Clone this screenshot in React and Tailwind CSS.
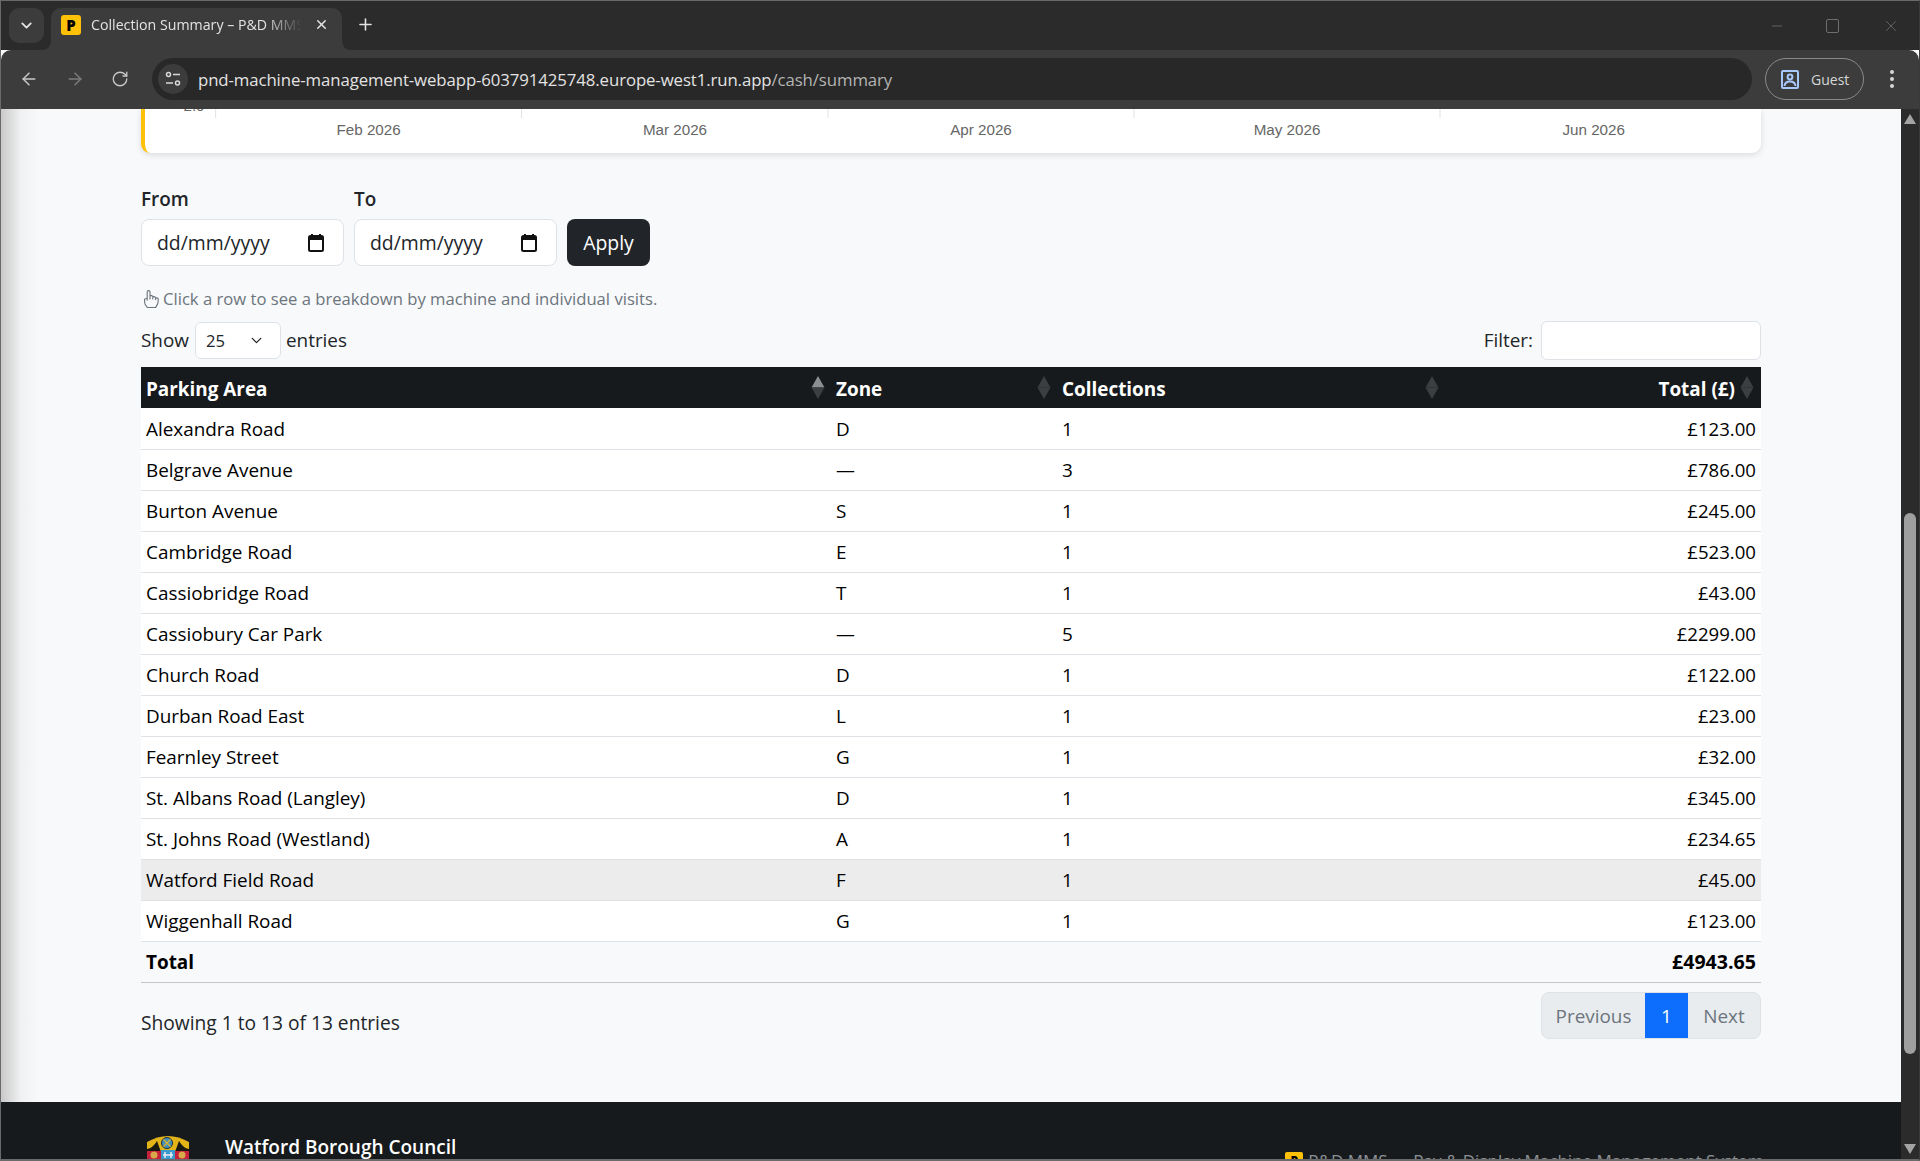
import React from "react";
import { ArrowLeft, ArrowRight, RotateCw, ChevronDown, Plus, X, Minus } from "lucide-react";
import { BsHandIndex } from "react-icons/bs";

const rows = [
  ["Alexandra Road", "D", "1", "£123.00"],
  ["Belgrave Avenue", "—", "3", "£786.00"],
  ["Burton Avenue", "S", "1", "£245.00"],
  ["Cambridge Road", "E", "1", "£523.00"],
  ["Cassiobridge Road", "T", "1", "£43.00"],
  ["Cassiobury Car Park", "—", "5", "£2299.00"],
  ["Church Road", "D", "1", "£122.00"],
  ["Durban Road East", "L", "1", "£23.00"],
  ["Fearnley Street", "G", "1", "£32.00"],
  ["St. Albans Road (Langley)", "D", "1", "£345.00"],
  ["St. Johns Road (Westland)", "A", "1", "£234.65"],
  ["Watford Field Road", "F", "1", "£45.00"],
  ["Wiggenhall Road", "G", "1", "£123.00"],
];

function SortIcon({ active, shift }) {
  return (
    <svg width="14" height="23" viewBox="0 0 14 23" className={`absolute top-[9px] ${shift ? "right-[6px]" : "right-[7px]"}`}>
      <path d="M7 0 L13.5 11.5 H0.5 Z" fill={active ? "#8c8e90" : "#3b3f42"} />
      <path d="M7 23 L13.5 11.5 H0.5 Z" fill="#3b3f42" />
    </svg>
  );
}

function CalendarIcon() {
  return (
    <svg width="16" height="18" viewBox="0 0 16 18" className="shrink-0">
      <rect x="3" y="0" width="2" height="3" fill="#111" />
      <rect x="11" y="0" width="2" height="3" fill="#111" />
      <rect x="1" y="2" width="14" height="15" rx="1.5" fill="none" stroke="#111" strokeWidth="2" />
      <rect x="1" y="2" width="14" height="4" fill="#111" />
    </svg>
  );
}

function DateField() {
  return (
    <div className="flex h-[47px] w-[203px] items-center justify-between rounded-[8px] border border-[#dee2e6] bg-white pl-[15px] pr-[19px] text-[19.4px] text-[#212529]">
      <span>dd/mm/yyyy</span>
      <CalendarIcon />
    </div>
  );
}

function Crest() {
  return (
    <svg width="44" height="46" viewBox="0 0 44 46" className="shrink-0">
      <path d="M1 6 Q22 -6 43 6 L43 20 H1 Z" fill="#e3b417" />
      <path d="M1 13 Q7 12 11 5 L15 16 H29 L33 5 Q37 12 43 13 L43 22 H1 Z" fill="#1a1a10" />
      <circle cx="21" cy="7" r="5.5" fill="#3f8fbf" stroke="#20303a" strokeWidth="1" />
      <path d="M17.5 3.5 L24.5 10.5 M24.5 3.5 L17.5 10.5" stroke="#d8b030" strokeWidth="1.4" />
      <rect x="1" y="15" width="14" height="28" fill="#c5213a" />
      <rect x="29" y="15" width="14" height="28" fill="#c5213a" />
      <rect x="15" y="14" width="14" height="30" fill="#3a9ad0" />
      <path d="M19 16 V22 M25 16 V22 M17 19 H27" stroke="#f0f0f0" strokeWidth="1.5" />
      <circle cx="8" cy="19" r="3.5" fill="#d8a84a" />
      <circle cx="36" cy="19" r="3.5" fill="#d8a84a" />
    </svg>
  );
}

function Toolbar() {
  return (
    <div className="flex h-[59px] shrink-0 items-start rounded-t-[10px] bg-[#3c3c3c] pt-[8px]">
      <div className="flex h-[42px] w-[151px] shrink-0 items-center text-[#c7c7c7]">
        <ArrowLeft className="ml-[18px] h-[20px] w-[20px]" strokeWidth={1.8} />
        <ArrowRight className="ml-[26px] h-[20px] w-[20px] text-[#7c7c7c]" strokeWidth={1.8} />
        <RotateCw className="ml-[26px] h-[18px] w-[18px]" strokeWidth={1.8} />
      </div>
      <div className="flex h-[42px] w-[1600px] shrink-0 items-center rounded-full bg-[#282828] pl-[6px]">
        <div className="flex h-[30px] w-[30px] items-center justify-center rounded-full bg-[#3c3c3c]">
          <svg width="16" height="16" viewBox="0 0 16 16" fill="none" stroke="#d8d8d8" strokeWidth="1.5">
            <circle cx="3.5" cy="3.5" r="2" />
            <path d="M8 3.5 H15" />
            <circle cx="12.5" cy="12" r="2" />
            <path d="M1 12 H8" />
          </svg>
        </div>
        <div className="ml-[10px] whitespace-nowrap text-[16.8px] tracking-[-0.1px] text-[#e3e3e3]">
          pnd-machine-management-webapp-603791425748.europe-west1.run.app<span className="text-[#b4b4b4]">/cash/summary</span>
        </div>
      </div>
      <div className="ml-[13px] flex h-[42px] w-[99px] shrink-0 items-center rounded-full border border-[#8a8a8a] pl-[15px]">
        <svg width="18" height="19" viewBox="0 0 18 19" fill="none" stroke="#a8c7fa" strokeWidth="2">
          <rect x="1" y="1" width="16" height="17" rx="1" />
          <circle cx="9" cy="7" r="2.4" />
          <path d="M3.5 16 Q4 11.5 9 11.5 Q14 11.5 14.5 16" />
        </svg>
        <span className="ml-[12px] text-[14px] text-[#d6d6d6]">Guest</span>
      </div>
      <div className="ml-[26px] flex h-[42px] flex-col justify-center gap-[3px]">
        <span className="h-[4px] w-[4px] rounded-full bg-[#d6d6d6]" />
        <span className="h-[4px] w-[4px] rounded-full bg-[#d6d6d6]" />
        <span className="h-[4px] w-[4px] rounded-full bg-[#d6d6d6]" />
      </div>
    </div>
  );
}

function TabBar() {
  return (
    <div className="flex h-[49px] shrink-0 items-start bg-[#2b2b2b] pt-[7px]">
      <div className="ml-[8px] flex h-[35px] w-[35px] shrink-0 items-center justify-center rounded-[10px] bg-[#3c3c3c]">
        <ChevronDown className="h-[17px] w-[17px] text-[#e3e3e3]" strokeWidth={2.6} />
      </div>
      <div className="relative ml-[7px] flex h-[42px] w-[291px] shrink-0 items-start rounded-t-[10px] bg-[#3c3c3c] pl-[10px] pt-[7px]">
        <svg width="10" height="10" viewBox="0 0 10 10" className="absolute -left-[10px] bottom-0">
          <path d="M10 0 V10 H0 Q10 10 10 0 Z" fill="#3c3c3c" />
        </svg>
        <svg width="10" height="10" viewBox="0 0 10 10" className="absolute -right-[10px] bottom-0">
          <path d="M0 0 V10 H10 Q0 10 0 0 Z" fill="#3c3c3c" />
        </svg>
        <div className="flex h-[20px] w-[20px] shrink-0 items-center justify-center rounded-[3px] bg-[#ffc107] text-[15px] font-extrabold leading-none text-black">P</div>
        <div className="ml-[10px] h-[20px] w-[211px] overflow-hidden whitespace-nowrap text-[14.2px] leading-[20px] text-[#e3e3e3] [mask-image:linear-gradient(to_right,black_82%,transparent)]">
          Collection Summary – P&amp;D MMS
        </div>
        <X className="ml-[12px] mt-[2px] h-[15px] w-[15px] text-[#e3e3e3]" strokeWidth={2.4} />
      </div>
      <Plus className="ml-[14px] mt-[7px] h-[19px] w-[19px] text-[#e3e3e3]" strokeWidth={2} />
      <div className="ml-auto mr-[19px] mt-[9px] flex items-center text-[#6e6e6e]">
        <Minus className="h-[16px] w-[16px]" strokeWidth={1.2} />
        <span className="ml-[41px] h-[14px] w-[13px] rounded-[2px] border border-[#6e6e6e]" />
        <X className="ml-[43px] h-[18px] w-[18px]" strokeWidth={1.1} />
      </div>
    </div>
  );
}

function Chart() {
  const ticks = [70.7, 376.6, 683, 989, 1295];
  const labels = [
    ["Feb 2026", 223.6],
    ["Mar 2026", 530],
    ["Apr 2026", 836],
    ["May 2026", 1142],
    ["Jun 2026", 1448.7],
  ];
  return (
    <div className="h-[44px] w-[1620px] overflow-hidden rounded-b-[9px] border-l-[4px] border-[#ffc107] bg-white shadow-[0_2px_6px_rgba(0,0,0,0.12)]">
      <svg width="1616" height="44" viewBox="0 0 1616 44" className="block">
        <text x="49" y="2" fontFamily="Liberation Sans" fontSize="15.2" fill="#666" textAnchor="middle">2.0</text>
        {ticks.map((x) => (
          <line key={x} x1={x} x2={x} y1="0" y2="9" stroke="#e1e1e1" />
        ))}
        {labels.map(([t, x]) => (
          <text key={t} x={x} y="26" fontFamily="Liberation Sans" fontSize="15.2" fill="#666" textAnchor="middle">{t}</text>
        ))}
      </svg>
    </div>
  );
}

function Scrollbar() {
  return (
    <div className="flex h-full w-[18px] shrink-0 flex-col items-center bg-[#2b2b2b]">
      <svg width="14" height="12" viewBox="0 0 14 12" className="mt-[4px] shrink-0">
        <path d="M7 1 L13 11 H1 Z" fill="#a3a3a3" />
      </svg>
      <div className="mt-[388px] h-[541px] w-[12px] shrink-0 rounded-full bg-[#9f9f9f]" />
      <svg width="14" height="12" viewBox="0 0 14 12" className="mt-[89px] shrink-0">
        <path d="M7 11 L13 1 H1 Z" fill="#a3a3a3" />
      </svg>
    </div>
  );
}

export default function App() {
  return (
    <div className="relative flex h-[1161px] w-[1920px] flex-col overflow-hidden border-x border-b-[2px] border-t border-[#6a6a6a] border-r-[#3a3a3a] bg-[#f8f9fa] font-['Open_Sans',sans-serif] text-[18.9px] leading-[29px] text-[#212529]">
      <TabBar />
      <Toolbar />
      <div className="flex min-h-0 flex-1">
        <div className="relative min-w-0 flex-1 overflow-hidden">
          <div className="pointer-events-none absolute left-0 top-0 z-10 h-[993px] w-[40px] bg-gradient-to-r from-[#c9c9c9] via-[#f0f1f2] to-[#f8f9fa]" />
          <div className="pl-[140px]">
            <Chart />
            <div className="mt-[32px] flex w-[1620px] items-end gap-[10px]">
              <div>
                <div className="mb-[5px] h-[29px] font-semibold">From</div>
                <DateField />
              </div>
              <div>
                <div className="mb-[5px] h-[29px] font-semibold">To</div>
                <DateField />
              </div>
              <button className="h-[47px] w-[83px] rounded-[8px] bg-[#212529] text-[19.4px] text-white">Apply</button>
            </div>
            <div className="mt-[18px] flex h-[29px] items-center text-[16.65px] text-[#6c757d]">
              <BsHandIndex className="h-[18px] w-[18px]" />
              <span className="ml-[4px]">Click a row to see a breakdown by machine and individual visits.</span>
            </div>
            <div className="mt-[8px] flex h-[39px] w-[1620px] items-center justify-between">
              <div className="flex items-center">
                <span>Show</span>
                <div className="ml-[6px] flex h-[37px] w-[86px] items-center rounded-[6px] border border-[#dee2e6] bg-white pl-[10px] text-[16.6px]">
                  <span>25</span>
                  <ChevronDown className="ml-[23px] h-[17px] w-[17px]" strokeWidth={1.8} />
                </div>
                <span className="ml-[5px]">entries</span>
              </div>
              <div className="flex items-center">
                <span>Filter:</span>
                <div className="ml-[8px] h-[39px] w-[220px] rounded-[6px] border border-[#dee2e6] bg-white" />
              </div>
            </div>
            <table className="mt-[7px] w-[1620px] table-fixed border-collapse">
              <colgroup>
                <col className="w-[690px]" />
                <col className="w-[226px]" />
                <col className="w-[389px]" />
                <col className="w-[315px]" />
              </colgroup>
              <thead>
                <tr className="h-[41px] bg-[#171a1d] font-bold text-white">
                  <th className="relative px-[5px] pt-[3px] text-left font-bold">Parking Area<SortIcon active shift /></th>
                  <th className="relative px-[5px] pt-[3px] text-left font-bold">Zone<SortIcon shift /></th>
                  <th className="relative px-[5px] pt-[3px] text-left font-bold">Collections<SortIcon /></th>
                  <th className="relative pr-[26px] pt-[3px] text-right font-bold">Total (£)<SortIcon /></th>
                </tr>
              </thead>
              <tbody>
                {rows.map((r, i) => (
                  <tr key={r[0]} className={`h-[41px] border-b border-[#dee2e6] text-black ${i === 11 ? "bg-[#ececec]" : "bg-white"}`}>
                    <td className="px-[5px] pt-[2px]">{r[0]}</td>
                    <td className="px-[5px] pt-[2px]">{r[1]}</td>
                    <td className="px-[5px] pt-[2px]">{r[2]}</td>
                    <td className="px-[5px] text-right text-[18.6px]">{r[3]}</td>
                  </tr>
                ))}
                <tr className="h-[41px] border-b border-[#c4c6c9] font-bold text-black">
                  <td className="px-[5px] pt-[2px]">Total</td>
                  <td />
                  <td />
                  <td className="px-[5px] text-right text-[19.6px]">£4943.65</td>
                </tr>
              </tbody>
            </table>
            <div className="mt-[9px] flex w-[1620px] items-start justify-between">
              <div className="pt-[16px] text-[19.2px]">Showing 1 to 13 of 13 entries</div>
              <div className="flex h-[47px] overflow-hidden rounded-[8px] border border-[#dee2e6] bg-[#e9ecef] text-[#6c757d]">
                <span className="flex w-[103px] items-center justify-center pt-[2px]">Previous</span>
                <span className="flex w-[43px] items-center justify-center bg-[#0d6efd] pt-[2px] text-white">1</span>
                <span className="flex w-[72px] items-center justify-center pt-[2px]">Next</span>
              </div>
            </div>
          </div>
          <footer className="mt-[63px] flex h-[60px] w-full bg-[#171a1d] pl-[145px] pt-[34px] text-white">
            <Crest />
            <div className="ml-[35px] -mt-[3px] text-[19px] font-semibold">Watford Borough Council</div>
            <div className="ml-[829px] mt-[16px] flex items-start whitespace-nowrap text-[17px] text-[#8b9095]">
              <span className="flex h-[18px] w-[18px] shrink-0 items-center justify-center rounded-[2px] bg-[#ffc107] text-[12px] font-extrabold text-black">P</span>
              <span className="ml-[5px] -mt-[6px]">P&amp;D MMS — Pay &amp; Display Machine Management System</span>
            </div>
          </footer>
        </div>
        <Scrollbar />
      </div>
    </div>
  );
}
